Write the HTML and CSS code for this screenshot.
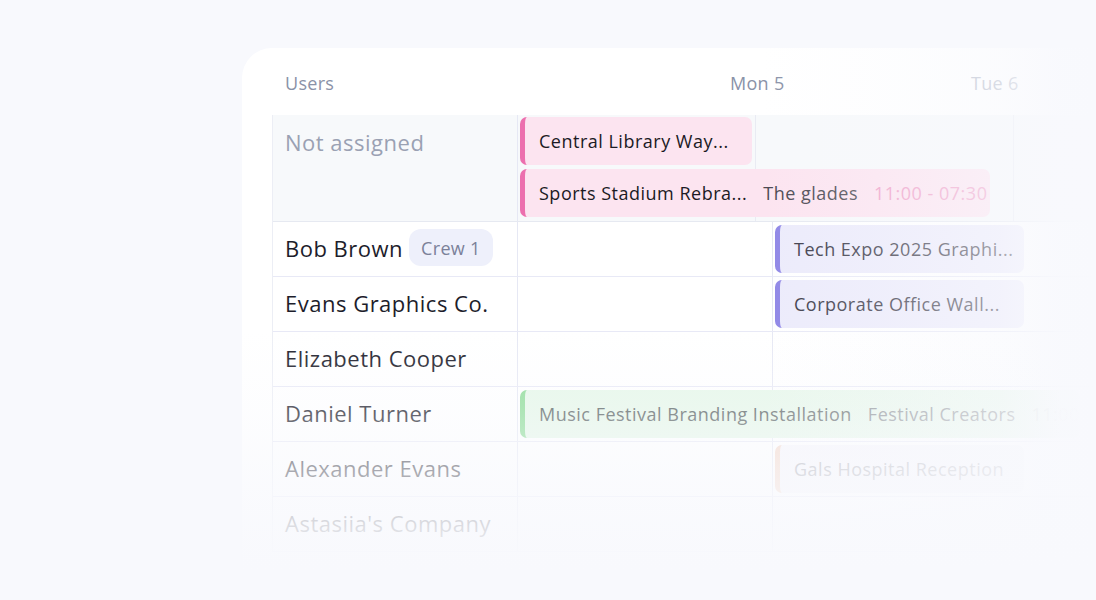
FILE: index.html
```html
<!DOCTYPE html>
<html>
<head>
<meta charset="utf-8">
<link rel="stylesheet" href="styles.css">
</head>
<body>
<div class="stage">
  <div class="card">
    <div class="head">
      <div class="h-users">Users</div>
      <div class="h-mon">Mon 5</div>
      <div class="h-tue">Tue 6</div>
    </div>
    <div class="grid">
      <div class="row row-na">
        <div class="name na">Not assigned</div>
        <div class="tl tl-na">
          <div class="ev pink ev-central"><span class="t">Central Library Way...</span></div>
          <div class="ev pink ev-sports"><span class="t">Sports Stadium Rebra...</span><span class="sub">The glades</span><span class="time">11:00 - 07:30</span></div>
        </div>
      </div>
      <div class="row">
        <div class="name">Bob Brown <span class="badge">Crew 1</span></div>
        <div class="tl">
          <div class="ev lav ev-day2"><span class="t">Tech Expo 2025 Graphi...</span></div>
        </div>
      </div>
      <div class="row">
        <div class="name">Evans Graphics Co.</div>
        <div class="tl">
          <div class="ev lav ev-day2"><span class="t">Corporate Office Wall...</span></div>
        </div>
      </div>
      <div class="row">
        <div class="name">Elizabeth Cooper</div>
        <div class="tl"></div>
      </div>
      <div class="row">
        <div class="name">Daniel Turner</div>
        <div class="tl">
          <div class="ev green ev-music"><span class="t">Music Festival Branding Installation</span><span class="sub">Festival Creators</span><span class="time">11:00</span></div>
        </div>
      </div>
      <div class="row">
        <div class="name">Alexander Evans</div>
        <div class="tl">
          <div class="ev peach ev-day2"><span class="t">Gals Hospital Reception</span></div>
        </div>
      </div>
      <div class="row">
        <div class="name">Astasiia's Company</div>
        <div class="tl"></div>
      </div>
    </div>
  </div>
  <div class="fade-right"></div>
  <div class="fade-bottom"></div>
</div>
</body>
</html>
```
FILE: styles.css
```css
* { box-sizing: border-box; }
html, body { margin: 0; padding: 0; }
body {
  background: #f8f9fd;
  font-family: "Open Sans", "Noto Sans", sans-serif;
  overflow: hidden;
  width: 1096px;
  height: 600px;
}
.stage {
  position: relative;
  width: 1096px;
  height: 600px;
  overflow: hidden;
  padding: 48px 0 0 242px;
}
.card {
  width: 900px;
  height: 640px;
  background: #ffffff;
  border-top-left-radius: 30px;
  padding-left: 30px;
}
.head {
  height: 67px;
  display: flex;
  align-items: center;
  font-size: 18px;
  letter-spacing: 0.3px;
  color: #8a92a8;
  padding-top: 2px;
}
.h-users { width: 458px; padding-left: 13px; }
.h-mon { width: 241px; }
.h-tue { color: #b4bac9; }

.grid {
  border-left: 1px solid #eceef5;
}
.row {
  display: flex;
  height: 55px;
  border-bottom: 1px solid #e8e9f6;
}
.row-na {
  height: 107px;
  background: #f7f9fb;
  border-bottom-color: #e6e9f1;
}
.name {
  width: 245px;
  flex: none;
  border-right: 1px solid #e6e8f4;
  padding-left: 12px;
  padding-bottom: 3px;
  display: flex;
  align-items: center;
  font-size: 22px;
  letter-spacing: 0.5px;
  color: #1d1d2b;
  font-weight: 500;
  white-space: nowrap;
}
.name.na {
  align-items: flex-start;
  padding-top: 12px;
  padding-bottom: 0;
  color: #9aa1b3;
}
.badge {
  margin-left: 6px;
  height: 37px;
  padding: 0 12px;
  display: inline-flex;
  align-items: center;
  border-radius: 12px;
  background: #eef0fb;
  color: #7b8199;
  font-size: 18px;
  letter-spacing: 0.3px;
  font-weight: 500;
}
.tl {
  flex: 1;
  position: relative;
  padding-top: 3px;
  background-image: linear-gradient(#e6e8f4, #e6e8f4);
  background-size: 1px 100%;
  background-repeat: no-repeat;
  background-position: 254px 0;
}
.tl-na {
  padding-top: 2px;
  background-image: linear-gradient(#e9ebf3, #e9ebf3), linear-gradient(#e9ebf3, #e9ebf3);
  background-size: 1px 100%, 1px 100%;
  background-position: 237px 0, 495px 0;
}
.ev {
  height: 48px;
  border-radius: 7px;
  border-left: 5px solid;
  display: flex;
  align-items: center;
  padding-left: 14px;
  font-size: 18px;
  letter-spacing: 0.5px;
  font-weight: 500;
  white-space: nowrap;
  overflow: hidden;
}
.ev .sub { margin-left: 16px; font-weight: 400; }
.ev .time { margin-left: 16px; font-weight: 400; }
.pink { background: #fce4f0; border-left-color: #ec6fae; color: #1b1a24; }
.pink .sub { color: #4a4852; }
.pink .time { color: #f0a0c8; }
.lav { background: #ecebfb; border-left-color: #8f86e6; color: #3a3948; }
.green { background: #e6f7e9; border-left-color: #8edc98; color: #566060; }
.green .sub { color: #7b8186; }
.green .time { color: #c9d4cc; }
.peach { background: #f7f6fb; border-left-color: #f4d5c5; color: #a4a5ad; }

.ev-central { width: 232px; margin-left: 2px; }
.ev-sports { width: 470px; margin-left: 2px; margin-top: 4px; }
.ev-day2 { width: 249px; margin-left: 257px; }
.ev-music { width: 560px; margin-left: 2px; }

.fade-right {
  position: absolute;
  top: 0;
  left: 760px;
  width: 336px;
  height: 600px;
  background: linear-gradient(to right, rgba(248,249,253,0) 0px, rgba(248,249,253,0.22) 110px, rgba(248,249,253,0.55) 240px, rgba(248,249,253,0.95) 300px, #f8f9fd 336px);
}
.fade-bottom {
  position: absolute;
  left: 0;
  top: 330px;
  width: 1096px;
  height: 270px;
  background: linear-gradient(to bottom, rgba(248,249,253,0) 0px, rgba(248,249,253,0.3) 80px, rgba(248,249,253,0.62) 137px, rgba(248,249,253,0.86) 192px, #f8f9fd 240px);
}
```
